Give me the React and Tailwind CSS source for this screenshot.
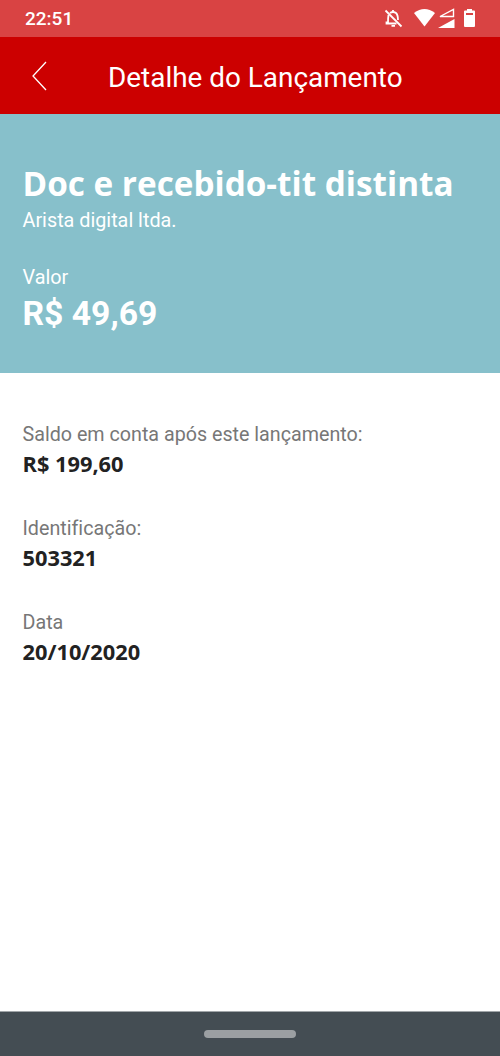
function Field({ label, value }) {
  return (
    <div className="mb-[30px] h-16">
      <p className="h-[30px] font-[Roboto,sans-serif] text-[19.7px] leading-[30px] text-[#777777] [font-variant-ligatures:none]">{label}</p>
      <p className="font-['Open_Sans',sans-serif] text-[21.8px] leading-[28px] font-bold text-[#222222]">{value}</p>
    </div>
  );
}

export default function App() {
  return (
    <div className="flex h-[1056px] w-[500px] flex-col overflow-hidden bg-white font-[Roboto,sans-serif] text-white">
      <div className="flex h-[37px] shrink-0 items-center justify-between bg-[#d94343] pl-[25px]">
        <span className="text-[19px] leading-none font-medium">22:51</span>
        <svg width="125" height="37" viewBox="375 0 125 37" fill="none">
          <path d="M385.500 10.500L401.500 26.500" stroke="white" strokeWidth="1.8" />
          <path d="M390 13Q393 11 396 13Q398 15 398 20M388.500 15Q388 18 388 22.500H386.500V23.500H396.500M393 10V12M391.500 25.800H395" stroke="white" strokeWidth="1.8" />
          <path d="M414 13Q424.500 5 435 13L424.500 26.500Z" fill="white" />
          <path d="M440 16.500L453.500 9.500V16.500Z" stroke="white" strokeWidth="1.4" />
          <path d="M438 28L454.500 19V28Z" fill="white" />
          <path d="M467 9H472V10.500H474Q475 10.500 475 11.500V26Q475 27 474 27H465Q464 27 464 26V11.500Q464 10.500 465 10.500H467Z" fill="white" />
          <path d="M466 14H473" stroke="#d94343" strokeWidth="2" />
        </svg>
      </div>
      <header className="flex h-[77px] shrink-0 items-center bg-[#cc0000] pl-[31px]">
        <svg width="17" height="30" viewBox="0 0 17 30" fill="none"><path d="M15 1L2 15L15 29" stroke="white" strokeWidth="1.3" /></svg>
        <h1 className="ml-[60px] pt-[5px] text-[27.9px] leading-none whitespace-nowrap">Detalhe do Lançamento</h1>
      </header>
      <section className="h-[259px] shrink-0 bg-[#87c0cb] px-[22.5px] pt-[48px]">
        <h2 className="font-['Open_Sans',sans-serif] text-[33.3px] leading-[42px] font-bold whitespace-nowrap">Doc e recebido-tit distinta</h2>
        <p className="mt-[2px] text-[19.8px] leading-[30px]">Arista digital ltda.</p>
        <p className="mt-[27px] text-[19.8px] leading-[30px]">Valor</p>
        <p className="text-[33.7px] leading-[42px] font-bold">R$ 49,69</p>
      </section>
      <main className="grow px-[22.5px] pt-[47px]">
        <Field label="Saldo em conta após este lançamento:" value="R$ 199,60" />
        <Field label="Identificação:" value="503321" />
        <Field label="Data" value="20/10/2020" />
      </main>
      <footer className="flex h-[45px] shrink-0 items-center justify-center border-t border-[#a1a6a9] bg-[#444d53]">
        <div className="h-[8px] w-[92px] rounded-full bg-[#9b9fa2]" />
      </footer>
    </div>
  );
}
